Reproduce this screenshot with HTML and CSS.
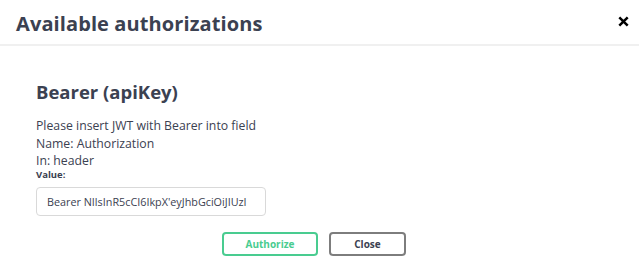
FILE: index.html
```html
<!DOCTYPE html>
<html>
<head>
<meta charset="utf-8">
<link rel="stylesheet" href="styles.css">
</head>
<body>
<div class="modal">
  <div class="modal-header">
    <h3 class="modal-title">Available authorizations</h3>
    <button class="close-modal" aria-label="Close">
      <svg width="11" height="11" viewBox="0 0 11 11"><path d="M1.3 1.3 L9.7 9.7 M9.7 1.3 L1.3 9.7" stroke="#000" stroke-width="2.5" stroke-linecap="butt"/></svg>
    </button>
  </div>
  <div class="modal-body">
    <div class="auth">
      <h4 class="auth-title">Bearer (apiKey)</h4>
      <div class="auth-desc">
        <p>Please insert JWT with Bearer into field</p>
        <p>Name: Authorization</p>
        <p>In: header</p>
      </div>
      <label class="value-label">Value:</label>
      <div class="input">Bearer NIlsInR5cCI6IkpX'eyJhbGciOiJIUzI</div>
      <div class="actions">
        <button class="btn btn-authorize">Authorize</button>
        <button class="btn btn-close">Close</button>
      </div>
    </div>
  </div>
</div>
</body>
</html>
```

FILE: styles.css
```css
* { box-sizing: border-box; }
html, body { margin: 0; padding: 0; background: #fff; }
body { font-family: "Open Sans", "Liberation Sans", sans-serif; color: #3b4151; width: 639px; height: 270px; overflow: hidden; }
.modal-header {
  height: 46px;
  display: flex;
  align-items: center;
  justify-content: space-between;
  padding: 2px 10px 0 16px;
  border-bottom: 2px solid #f0f0f0;
}
.modal-title { margin: 0; font-size: 20px; font-weight: 700; color: #3b4151; letter-spacing: 0.1px; }
.close-modal { border: 0; background: none; padding: 0; display: flex; margin-top: -4px; }
.modal-body { padding: 0 0 0 36px; }
.auth-title { margin: 35px 0 0; font-size: 18.5px; font-weight: 700; line-height: 22px; color: #3b4151; }
.auth-desc { margin-top: 14px; font-size: 12.25px; line-height: 17.5px; color: #3b4151; }
.auth-desc p { margin: 0; }
.value-label { display: block; font-size: 9.5px; font-weight: 700; line-height: 14px; margin-top: -2px; }
.input {
  margin-top: 5px;
  width: 230px; height: 29px;
  border: 1px solid #d9d9d9; border-radius: 4px;
  font-size: 10.8px; line-height: 27px; padding-left: 10px;
  color: #3b4151; white-space: nowrap; overflow: hidden;
}
.actions { display: flex; gap: 11px; margin-top: 16px; padding-left: 186px; }
.btn {
  height: 24px; border-radius: 4px; border: 2px solid #888;
  background: #fff; font-family: inherit; font-size: 10px; font-weight: 700; padding: 0;
}
.btn-authorize { width: 96px; border-color: #49cc90; color: #49cc90; }
.btn-close { width: 77px; color: #3b4151; border-color: #7d7d7d; }
```
